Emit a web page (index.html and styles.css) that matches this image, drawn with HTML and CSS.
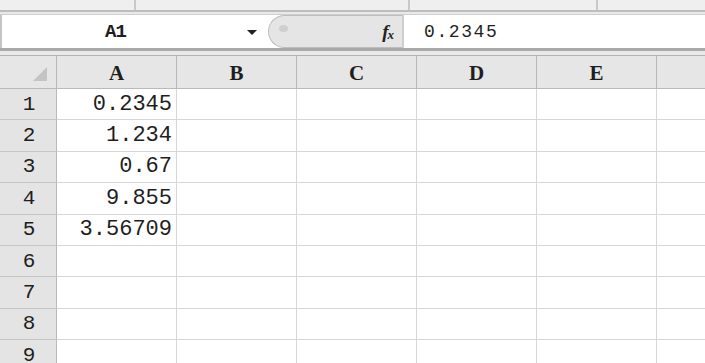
FILE: index.html
```html
<!DOCTYPE html>
<html>
<head>
	<title>Sheet</title>
	<link rel="stylesheet" href="styles.css">
</head>
<body>
	<div class="toolbar">
		<div class="tb-seg tb-1"></div>
		<div class="tb-seg tb-2"></div>
		<div class="tb-seg tb-3"></div>
		<div class="tb-seg tb-4"></div>
	</div>

	<div class="formula-bar">
		<div class="name-box">
			<span class="name-text">A1</span>
			<span class="drop"></span>
		</div>
		<div class="fx-pill">
			<span class="knob"></span>
			<span class="fx">f<sub>x</sub></span>
		</div>
		<div class="formula">0.2345</div>
	</div>

	<div class="sheet">
		<div class="hd corner"><span class="tri"></span></div>
		<div class="hd col">A</div>
		<div class="hd col">B</div>
		<div class="hd col">C</div>
		<div class="hd col">D</div>
		<div class="hd col">E</div>
		<div class="hd col last"></div>

		<div class="hd row">1</div><div class="cell num">0.2345</div><div class="cell"></div><div class="cell"></div><div class="cell"></div><div class="cell"></div><div class="cell"></div>
		<div class="hd row">2</div><div class="cell num">1.234</div><div class="cell"></div><div class="cell"></div><div class="cell"></div><div class="cell"></div><div class="cell"></div>
		<div class="hd row">3</div><div class="cell num">0.67</div><div class="cell"></div><div class="cell"></div><div class="cell"></div><div class="cell"></div><div class="cell"></div>
		<div class="hd row">4</div><div class="cell num">9.855</div><div class="cell"></div><div class="cell"></div><div class="cell"></div><div class="cell"></div><div class="cell"></div>
		<div class="hd row">5</div><div class="cell num">3.56709</div><div class="cell"></div><div class="cell"></div><div class="cell"></div><div class="cell"></div><div class="cell"></div>
		<div class="hd row">6</div><div class="cell"></div><div class="cell"></div><div class="cell"></div><div class="cell"></div><div class="cell"></div><div class="cell"></div>
		<div class="hd row">7</div><div class="cell"></div><div class="cell"></div><div class="cell"></div><div class="cell"></div><div class="cell"></div><div class="cell"></div>
		<div class="hd row">8</div><div class="cell"></div><div class="cell"></div><div class="cell"></div><div class="cell"></div><div class="cell"></div><div class="cell"></div>
		<div class="hd row">9</div><div class="cell"></div><div class="cell"></div><div class="cell"></div><div class="cell"></div><div class="cell"></div><div class="cell"></div>
	</div>
</body>
</html>
```

FILE: styles.css
```css
* {
	box-sizing: border-box;
}

body {
	margin: 0;
	width: 705px;
	height: 363px;
	overflow: hidden;
	background: #e9e9e9;
	font-family: "Liberation Mono", "DejaVu Sans Mono", monospace;
	color: #1e1e1e;
}

/* cut-off ribbon strip at the very top */
.toolbar {
	display: flex;
	height: 12px;
	border-bottom: 2px solid #bdbdbd;
	background: #efefef;
}
.tb-seg {
	border-right: 2px solid #c9c9c9;
}
.tb-1 { width: 136px; }
.tb-2 { width: 274px; }
.tb-3 { width: 188px; }
.tb-4 { flex: 1; border-right: none; }

.formula-bar {
	display: flex;
	height: 37px;
	margin-top: 2px;
	border-top: 1px solid #cfcfcf;
	border-bottom: 3px solid #a9a9a9;
	background: #fff;
}

.name-box {
	width: 266px;
	display: flex;
	align-items: center;
	border-left: 2px solid #c4c4c4;
	position: relative;
}
.name-text {
	font-size: 19px;
	font-weight: bold;
	margin-left: 103px;
	letter-spacing: -1px;
}
.drop {
	position: absolute;
	left: 245px;
	top: 15px;
	width: 0;
	height: 0;
	border-left: 5px solid transparent;
	border-right: 5px solid transparent;
	border-top: 5px solid #222;
}

.fx-pill {
	width: 134px;
	margin-left: 2px;
	background: #e5e5e5;
	border: 1px solid #bdbdbd;
	border-right: none;
	border-radius: 18px 0 0 18px;
	position: relative;
	display: flex;
	align-items: center;
	justify-content: flex-end;
	padding-right: 8px;
}
.knob {
	position: absolute;
	left: 10px;
	top: 9px;
	width: 9px;
	height: 7px;
	border-radius: 50%;
	background: #cfcfcf;
}
.fx {
	font-family: "Liberation Serif", serif;
	font-style: italic;
	font-weight: bold;
	font-size: 19px;
	color: #222;
}
.fx sub {
	font-size: 13px;
	vertical-align: -1px;
	margin-left: -1px;
}

.formula {
	flex: 1;
	border-left: 2px solid #cfcfcf;
	padding-left: 20px;
	display: flex;
	align-items: center;
	font-size: 18px;
	letter-spacing: 1.6px;
}

.sheet {
	margin-top: 4px;
	display: grid;
	grid-template-columns: 57px repeat(5, 120px) 1fr;
	grid-template-rows: 33px;
	grid-auto-rows: 31.4px;
	background: #fff;
	border-top: 1px solid #b3b3b3;
}

.hd {
	background: #e6e6e6;
	border-right: 1px solid #b9b9b9;
	border-bottom: 1px solid #b9b9b9;
	display: flex;
	align-items: center;
	justify-content: center;
	font-size: 20px;
}
.col {
	font-family: "Liberation Serif", serif;
	font-weight: bold;
	font-size: 21px;
	padding-top: 2px;
}
.col.last {
	border-right: none;
}
.row {
	background: #e4e4e4;
	border-bottom-color: #c6c6c6;
	font-size: 21px;
	padding-left: 2px;
}

.corner {
	position: relative;
}
.tri {
	position: absolute;
	right: 9px;
	bottom: 7px;
	width: 0;
	height: 0;
	border-left: 14px solid transparent;
	border-bottom: 14px solid #c4c4c4;
}

.cell {
	border-right: 1px solid #d6d6d6;
	border-bottom: 1px solid #d6d6d6;
}
.cell:nth-child(7n) {
	border-right: none;
}
.num {
	display: flex;
	align-items: center;
	justify-content: flex-end;
	padding-right: 4px;
	font-size: 22px;
}
```
